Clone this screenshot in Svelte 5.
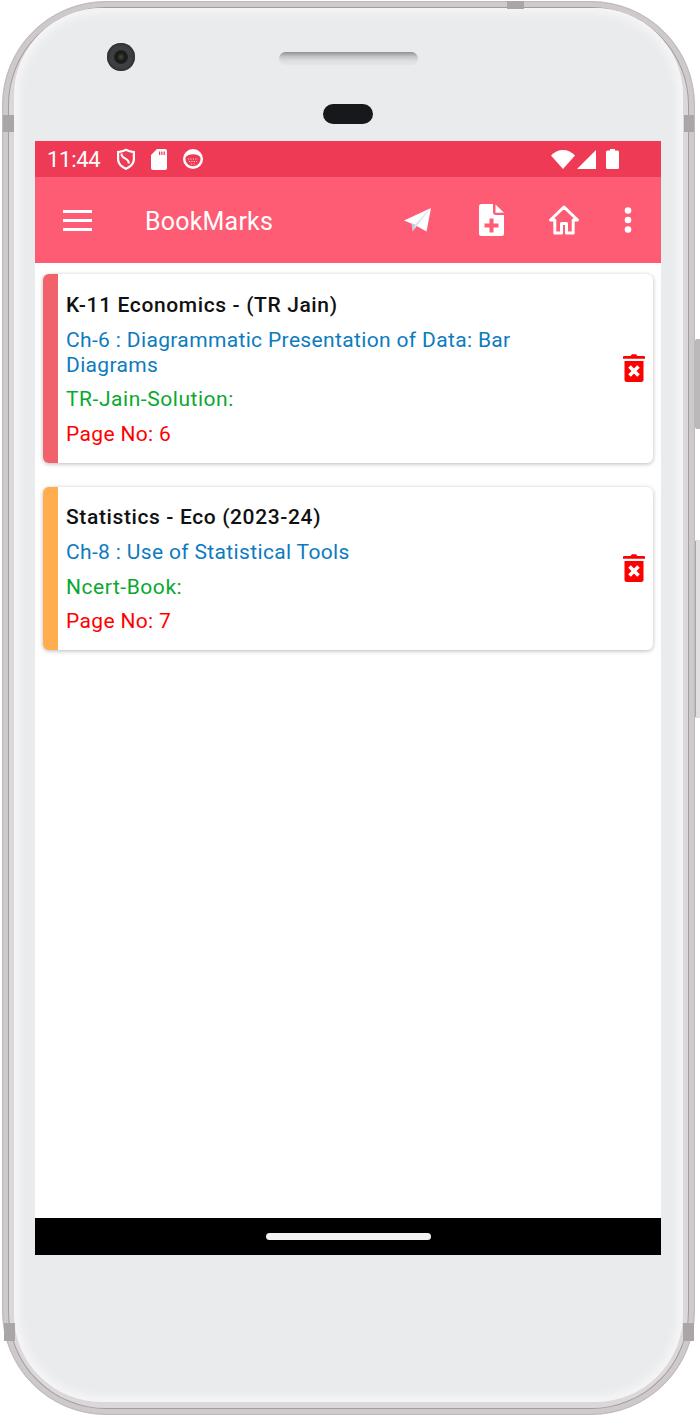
<script>
  const bookmarks = [
    {
      book: "K-11 Economics - (TR Jain)",
      chapter: "Ch-6 : Diagrammatic Presentation of Data: Bar Diagrams",
      source: "TR-Jain-Solution:",
      page: "Page No: 6",
      accent: "#f2626b",
    },
    {
      book: "Statistics - Eco (2023-24)",
      chapter: "Ch-8 : Use of Statistical Tools",
      source: "Ncert-Book:",
      page: "Page No: 7",
      accent: "#ffad4f",
    },
  ];
</script>

<div class="phone">
  <!-- device shell, purely decorative -->
  <div class="metal"></div>
  <div class="glass"></div>
  <span class="notch n-tl"></span>
  <span class="notch n-tr"></span>
  <span class="notch n-bl"></span>
  <span class="notch n-br"></span>
  <span class="notch n-top"></span>
  <span class="side power"></span>
  <span class="side volume"></span>
  <div class="camera"><span></span></div>
  <div class="speaker"></div>
  <div class="sensor"></div>

  <main class="screen">
    <div class="statusbar">
      <span class="clock">11:44</span>
      <svg class="st shield" viewBox="0 0 18 22">
        <path d="M9 .5C11.500 2 14.500 2.800 18 3v8c0 5-3.500 8.500-9 11-5.500-2.500-9-6-9-11V3C3.500 2.800 6.500 2 9 .5z" fill="#fff" />
        <path d="M9 3C11 4 13.300 4.700 15.800 5v6c0 3.700-2.500 6.500-6.800 8.500C4.700 17.500 2.200 14.700 2.200 11V5C4.700 4.700 7 4 9 3z" fill="#ee3a55" />
        <path d="M4.500 5.500C4.300 8 6 9.500 8.500 10.700c2 1 3.500 2.300 3.300 4.800" fill="none" stroke="#fff" stroke-width="2" />
      </svg>
      <svg class="st sd" viewBox="0 0 16 21">
        <path d="M6 0h8a2 2 0 0 1 2 2v17a2 2 0 0 1-2 2H2a2 2 0 0 1-2-2V6z" fill="#fff" />
        <path d="M8 2.500h1.200v3.500H8zM10.300 2.500h1.200v3.500h-1.200zM12.600 2.500h1.200v3.500h-1.200z" fill="#ee3a55" />
      </svg>
      <svg class="st cat" viewBox="0 0 20 20">
        <circle cx="10" cy="10" r="10" fill="#fff" />
        <path d="M2.500 8.500C4 6.500 6.500 5.300 10 5.300s6 1.200 7.500 3.200c.6 4.500-2.700 8.700-7.500 8.700s-8.100-4.200-7.500-8.700z" fill="#ee3a55" />
        <path d="M5 10h10M6 12.500h8M8 15h4" stroke="#fff" stroke-width="1.100" stroke-dasharray="1.200 1.200" opacity="0.75" />
      </svg>
      <span class="spacer"></span>
      <svg class="st wifi" viewBox="0 0 24 19">
        <path d="M12 19 0 5.500C3.300 2 7.400 0 12 0s8.700 2 12 5.500z" fill="#fff" />
      </svg>
      <svg class="st signal" viewBox="0 0 19 19">
        <path d="M19 0v19H0z" fill="#fff" />
      </svg>
      <svg class="st battery" viewBox="0 0 13 20">
        <path d="M4 0h5v1.500h2.500A1.500 1.500 0 0 1 13 3v15.500a1.500 1.500 0 0 1-1.500 1.500h-10A1.500 1.500 0 0 1 0 18.500V3a1.500 1.500 0 0 1 1.500-1.500H4z" fill="#fff" />
      </svg>
    </div>

    <header class="appbar">
      <button class="menu" aria-label="Menu">
        <svg viewBox="0 0 29 21" width="29" height="21">
          <path d="M0 1.500h29M0 10.500h29M0 19.500h29" stroke="#fff" stroke-width="3" />
        </svg>
      </button>
      <h1>BookMarks</h1>
      <div class="actions">
        <svg class="a-send" viewBox="0 0 27 24" width="27" height="24">
          <path d="M0 12.500 27 0 11 17z" fill="#fff" />
          <path d="M27 0 22.500 23.500 11 17z" fill="#fff" />
          <path d="M7.500 15 11 17l-2.500 6.500z" fill="#b5d3e6" />
          <path d="M11 17 27 0 8.500 23.500z" fill="#d5e6f1" />
        </svg>
        <svg class="a-file" viewBox="0 0 25 32" width="25" height="32">
          <path d="M2.500 0H14v8a3 3 0 0 0 3 3h8v18.500a2.500 2.500 0 0 1-2.500 2.500h-20A2.500 2.500 0 0 1 0 29.500v-27A2.500 2.500 0 0 1 2.500 0z" fill="#fff" />
          <path d="M16.500 .5 25 8.700h-8.500z" fill="#fff" />
          <path d="M10.500 14.500h4v5h5v4h-5v5h-4v-5h-5v-4h5z" fill="#fe5c74" />
        </svg>
        <svg class="a-home" viewBox="0 0 30 30" width="30" height="30">
          <path d="M15 2 1.500 15h4.300V28h6.700v-9.500h5V28h6.700V15h4.300z" fill="none" stroke="#fff" stroke-width="3" stroke-linejoin="round" />
        </svg>
        <svg class="a-more" viewBox="0 0 8 26" width="8" height="26">
          <circle cx="4" cy="3.500" r="3.300" fill="#fff" />
          <circle cx="4" cy="13" r="3.300" fill="#fff" />
          <circle cx="4" cy="22.500" r="3.300" fill="#fff" />
        </svg>
      </div>
    </header>

    <section class="list">
      {#each bookmarks as item}
        <article class="card" style="--accent: {item.accent}">
          <div class="body">
            <h2>{item.book}</h2>
            <p class="chapter">{item.chapter}</p>
            <p class="source">{item.source}</p>
            <p class="page">{item.page}</p>
          </div>
          <button class="remove" aria-label="Delete bookmark">
            <svg viewBox="0 0 22 28" width="22" height="28">
              <path d="M7.500 2 9 .3h4L14.500 2H21a1 1 0 0 1 1 1v1.700H0V3a1 1 0 0 1 1-1z" fill="#f00" />
              <path d="M1.500 7h19v18.500a2.500 2.500 0 0 1-2.500 2.500H4a2.500 2.500 0 0 1-2.500-2.500z" fill="#f00" />
              <path d="M6.500 12.500l9 9M15.500 12.500l-9 9" stroke="#fff" stroke-width="3.600" />
            </svg>
          </button>
        </article>
      {/each}
    </section>

    <footer class="navbar"><span></span></footer>
  </main>
</div>

<style>
  :global(body) {
    margin: 0;
    background: #fff;
  }

  .phone {
    position: relative;
    width: 700px;
    height: 1416px;
    overflow: hidden;
    padding: 141px 39px 0 35px;
    box-sizing: border-box;
    font-family: Roboto, sans-serif;
  }

  .metal {
    position: absolute;
    left: 2px;
    top: 1px;
    width: 693px;
    height: 1414px;
    box-sizing: border-box;
    border-radius: 104px;
    background: #dcd8da;
    border: 1px solid #bfb9bb;
    box-shadow: inset 0 0 0 5px #cec9cb, inset 0 0 0 6px #a39d9f;
  }

  .glass {
    position: absolute;
    left: 14px;
    top: 8px;
    width: 669px;
    height: 1394px;
    border-radius: 88px;
    background: #eaebed;
    box-shadow: inset 0 0 8px 5px #f6f6f8;
  }

  .notch {
    position: absolute;
    background: #aaa5a7;
  }
  .n-tl { left: 3px; top: 115px; width: 11px; height: 17px; }
  .n-tr { right: 6px; top: 115px; width: 10px; height: 17px; }
  .n-bl { left: 4px; top: 1323px; width: 11px; height: 18px; }
  .n-br { right: 6px; top: 1323px; width: 11px; height: 18px; }
  .n-top { left: 507px; top: 1px; width: 17px; height: 8px; }

  .side {
    position: absolute;
    left: 695px;
    width: 5px;
    background: #bcb9ba;
    border-radius: 2px 0 0 2px;
  }
  .power { top: 339px; height: 90px; }
  .volume { top: 540px; height: 178px; background: #e2e0e1; border-left: 1px solid #a9a6a7; box-sizing: border-box; }

  .camera {
    position: absolute;
    left: 107px;
    top: 43px;
    width: 28px;
    height: 28px;
    border-radius: 50%;
    background: #3d3f42;
    box-shadow: inset 0 0 3px #111;
  }
  .camera span {
    position: absolute;
    left: 7px;
    top: 7px;
    width: 14px;
    height: 14px;
    border-radius: 50%;
    background: radial-gradient(circle, #4b4a2c 0, #17181a 45%, #2b2c2f 100%);
  }

  .speaker {
    position: absolute;
    left: 279px;
    top: 52px;
    width: 139px;
    height: 13px;
    border-radius: 7px;
    background: linear-gradient(#8d9095, #c3c5c8 35%, #dfe0e2 70%, #e4e5e7);
  }

  .sensor {
    position: absolute;
    left: 323px;
    top: 104px;
    width: 50px;
    height: 20px;
    border-radius: 10px;
    background: #17181b;
  }

  .screen {
    position: relative;
    display: flex;
    flex-direction: column;
    width: 626px;
    height: 1114px;
    background: #fff;
  }

  .statusbar {
    display: flex;
    align-items: center;
    height: 36px;
    padding: 0 42px 0 12px;
    background: #ee3a55;
    color: #fff;
    flex: none;
  }
  .clock {
    font-size: 22px;
    letter-spacing: -0.3px;
    margin-right: 17px;
  }
  .st { display: block; flex: none; }
  .shield { width: 18px; height: 22px; margin-right: 16px; }
  .sd { width: 16px; height: 21px; margin-right: 16px; }
  .cat { width: 20px; height: 20px; }
  .spacer { flex: 1; }
  .wifi { width: 24px; height: 19px; margin-right: 2px; }
  .signal { width: 19px; height: 19px; margin-right: 10px; }
  .battery { width: 13px; height: 20px; }

  .appbar {
    display: flex;
    align-items: center;
    height: 86px;
    flex: none;
    background: #fe5c74;
    color: #fff;
    box-sizing: border-box;
    padding: 0 29px 0 28px;
  }
  .menu {
    display: block;
    padding: 0;
    border: 0;
    background: none;
    width: 29px;
    height: 21px;
    margin-right: 53px;
  }
  .menu svg { display: block; }
  h1 {
    margin: 0;
    padding-top: 2px;
    font-size: 25px;
    font-weight: 400;
    letter-spacing: 0.2px;
    flex: 1;
  }
  .actions {
    display: flex;
    align-items: center;
  }
  .actions svg { display: block; }
  .a-send { margin-right: 48px; }
  .a-file { margin-right: 45px; }
  .a-home { margin-right: 45px; }

  .list {
    flex: 1;
    display: flex;
    flex-direction: column;
    gap: 24px;
    padding: 11px 8px 0;
  }

  .card {
    display: flex;
    align-items: center;
    border-radius: 6px;
    background: #fff;
    border-left: 15px solid var(--accent);
    box-shadow: 0 1px 4px rgba(0, 0, 0, 0.28);
  }
  .body {
    flex: 1;
    min-width: 0;
    padding: 17.5px 0 16px 8px;
  }
  h2 {
    margin: 0 0 9px;
    font-size: 21px;
    line-height: 27px;
    font-weight: 500;
    color: #111;
    letter-spacing: 0.62px;
  }
  p {
    margin: 0;
    font-size: 21px;
    line-height: 25px;
    letter-spacing: 0.35px;
    padding-bottom: 9.5px;
  }
  p.page { padding-bottom: 0; }
  .chapter { color: #0c7bbf; }
  .source { color: #0aa82e; letter-spacing: 0.55px; }
  .page { color: #f00; }

  .remove {
    display: block;
    padding: 0;
    border: 0;
    background: none;
    margin: 0 8px 0 36px;
    flex: none;
  }
  .remove svg { display: block; }

  .navbar {
    height: 37px;
    flex: none;
    display: flex;
    align-items: center;
    justify-content: center;
    background: #000;
  }
  .navbar span {
    display: block;
    width: 165px;
    height: 7px;
    border-radius: 4px;
    background: #f2f2f2;
  }
</style>
